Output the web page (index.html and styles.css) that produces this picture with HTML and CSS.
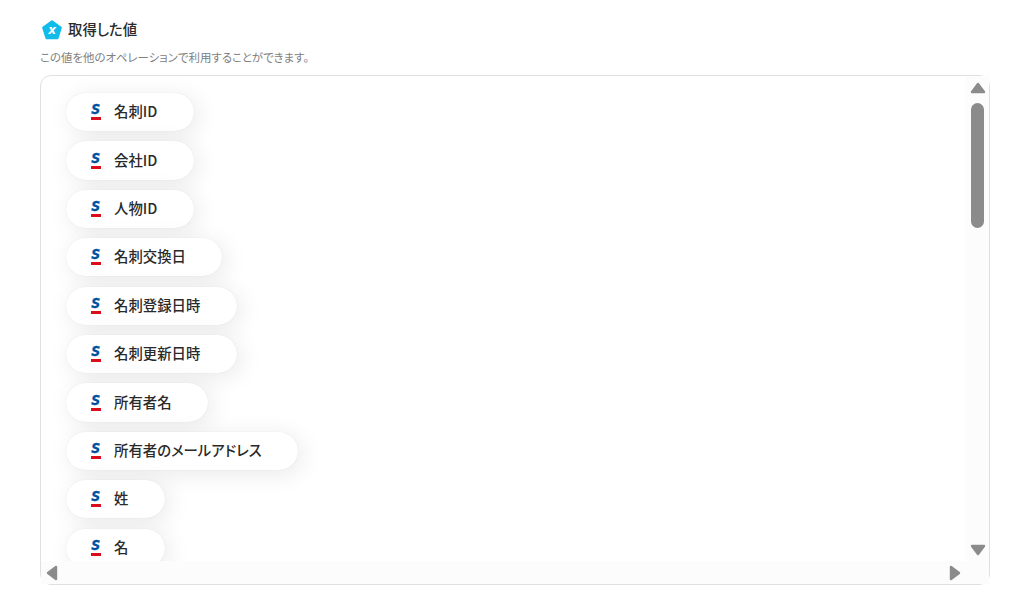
FILE: index.html
```
<!DOCTYPE html>
<html lang="ja">
<head>
    <meta charset="UTF-8">
    <meta name="viewport" content="width=device-width, initial-scale=1.0">
    <title>取得した値</title>
    <link rel="stylesheet" href="styles.css">
</head>
<body>
    <div class="header">
        <div class="header-icon">
            <svg width="20" height="20" viewBox="0 0 20 20">
                <path d="M10 1.5 L18.6 7.8 L15.4 18 H4.6 L1.4 7.8 Z" fill="#12bbea" stroke="#12bbea" stroke-width="2.4" stroke-linejoin="round"/>
            </svg>
            <span class="header-letter">x</span>
        </div>
        <h1>取得した値</h1>
    </div>
    <p class="description">この値を他のオペレーションで利用することができます。</p>
    <div class="panel">
        <div class="list">
            <div class="value"><span class="logo"><b>S</b></span><span>名刺ID</span></div>
            <div class="value"><span class="logo"><b>S</b></span><span>会社ID</span></div>
            <div class="value"><span class="logo"><b>S</b></span><span>人物ID</span></div>
            <div class="value"><span class="logo"><b>S</b></span><span>名刺交換日</span></div>
            <div class="value"><span class="logo"><b>S</b></span><span>名刺登録日時</span></div>
            <div class="value"><span class="logo"><b>S</b></span><span>名刺更新日時</span></div>
            <div class="value"><span class="logo"><b>S</b></span><span>所有者名</span></div>
            <div class="value"><span class="logo"><b>S</b></span><span>所有者のメールアドレス</span></div>
            <div class="value"><span class="logo"><b>S</b></span><span>姓</span></div>
            <div class="value"><span class="logo"><b>S</b></span><span>名</span></div>
        </div>
        <div class="bar bar-vertical">
            <svg class="arrow" viewBox="0 0 16 12"><path d="M8 2 L14 10 H2 Z"/></svg>
            <div class="thumb"></div>
            <svg class="arrow arrow-end" viewBox="0 0 16 12"><path d="M2 2 H14 L8 10 Z"/></svg>
        </div>
        <div class="bar bar-horizontal">
            <svg class="arrow" viewBox="0 0 12 16"><path d="M2 8 L10 2 V14 Z"/></svg>
            <svg class="arrow arrow-end" viewBox="0 0 12 16"><path d="M2 2 L10 8 L2 14 Z"/></svg>
        </div>
    </div>
</body>
</html>
```
FILE: styles.css
```
* {
    margin: 0;
    padding: 0;
    box-sizing: border-box;
}
body {
    font-family: "Noto Sans CJK JP", sans-serif;
    font-feature-settings: "palt";
    background: #fff;
    color: #2a2a2a;
    padding: 20px 37px 0 40px;
    overflow: hidden;
}
.header {
    display: flex;
    align-items: center;
    gap: 6px;
    height: 20px;
    padding-left: 2px;
}
.header-icon {
    display: grid;
    width: 20px;
    height: 20px;
}
.header-icon > * {
    grid-area: 1 / 1;
}
.header-letter {
    font: italic 700 12px/20px "DejaVu Sans", sans-serif;
    color: #fff;
    text-align: center;
}
h1 {
    font-size: 14.4px;
    font-weight: 500;
    line-height: 20px;
    padding-bottom: 2px;
}
.description {
    margin-top: 9px;
    font-size: 11.45px;
    line-height: 16px;
    color: #808080;
}
.panel {
    display: grid;
    grid-template-columns: 1fr 23px;
    grid-template-rows: 1fr 23px;
    width: 950px;
    height: 510px;
    margin-top: 10px;
    border: 1px solid #e0e0e0;
    border-radius: 11px;
}
.list {
    display: flex;
    flex-direction: column;
    align-items: flex-start;
    gap: 10.2px;
    min-height: 0;
    padding: 17px 25px 0;
    overflow: hidden;
}
.value {
    display: flex;
    flex-shrink: 0;
    align-items: center;
    gap: 12px;
    height: 38.22px;
    padding: 0 36.5px 1.8px 24px;
    background: #fff;
    border-radius: 20px;
    font-size: 14.4px;
    font-weight: 500;
    line-height: 20px;
    white-space: nowrap;
    box-shadow: 0 0 1px rgba(0, 0, 0, 0.12), 4px 4px 24px rgba(0, 0, 0, 0.09);
}
.logo {
    display: flex;
    flex-direction: column;
    align-items: center;
    width: 12px;
    height: 18px;
}
.logo::after {
    content: '';
    width: 10px;
    height: 3px;
    background: #dc0d1a;
}
.logo b {
    font: italic 700 13.4px/15px "DejaVu Sans", sans-serif;
    color: #0050a0;
    -webkit-text-stroke: 0.3px #0050a0;
    transform: translateY(-0.5px) scale(0.93, 1.05);
}
.bar {
    display: flex;
    background: #fcfcfc;
}
.bar-vertical {
    flex-direction: column;
    align-items: center;
    padding: 6px 0 5px;
}
.bar-horizontal {
    align-items: center;
    grid-column: 1 / 3;
    padding: 0 28px 0 5px;
}
.bar-vertical .arrow {
    width: 16px;
    height: 12px;
}
.bar-horizontal .arrow {
    width: 12px;
    height: 16px;
}
.arrow path {
    fill: #8b8b8b;
    stroke: #8b8b8b;
    stroke-width: 2.4;
    stroke-linejoin: round;
}
.bar-vertical .arrow-end {
    margin-top: auto;
}
.bar-horizontal .arrow-end {
    margin-left: auto;
}
.thumb {
    width: 13px;
    height: 125px;
    margin-top: 9px;
    background: #8b8b8b;
    border-radius: 7px;
}
```
